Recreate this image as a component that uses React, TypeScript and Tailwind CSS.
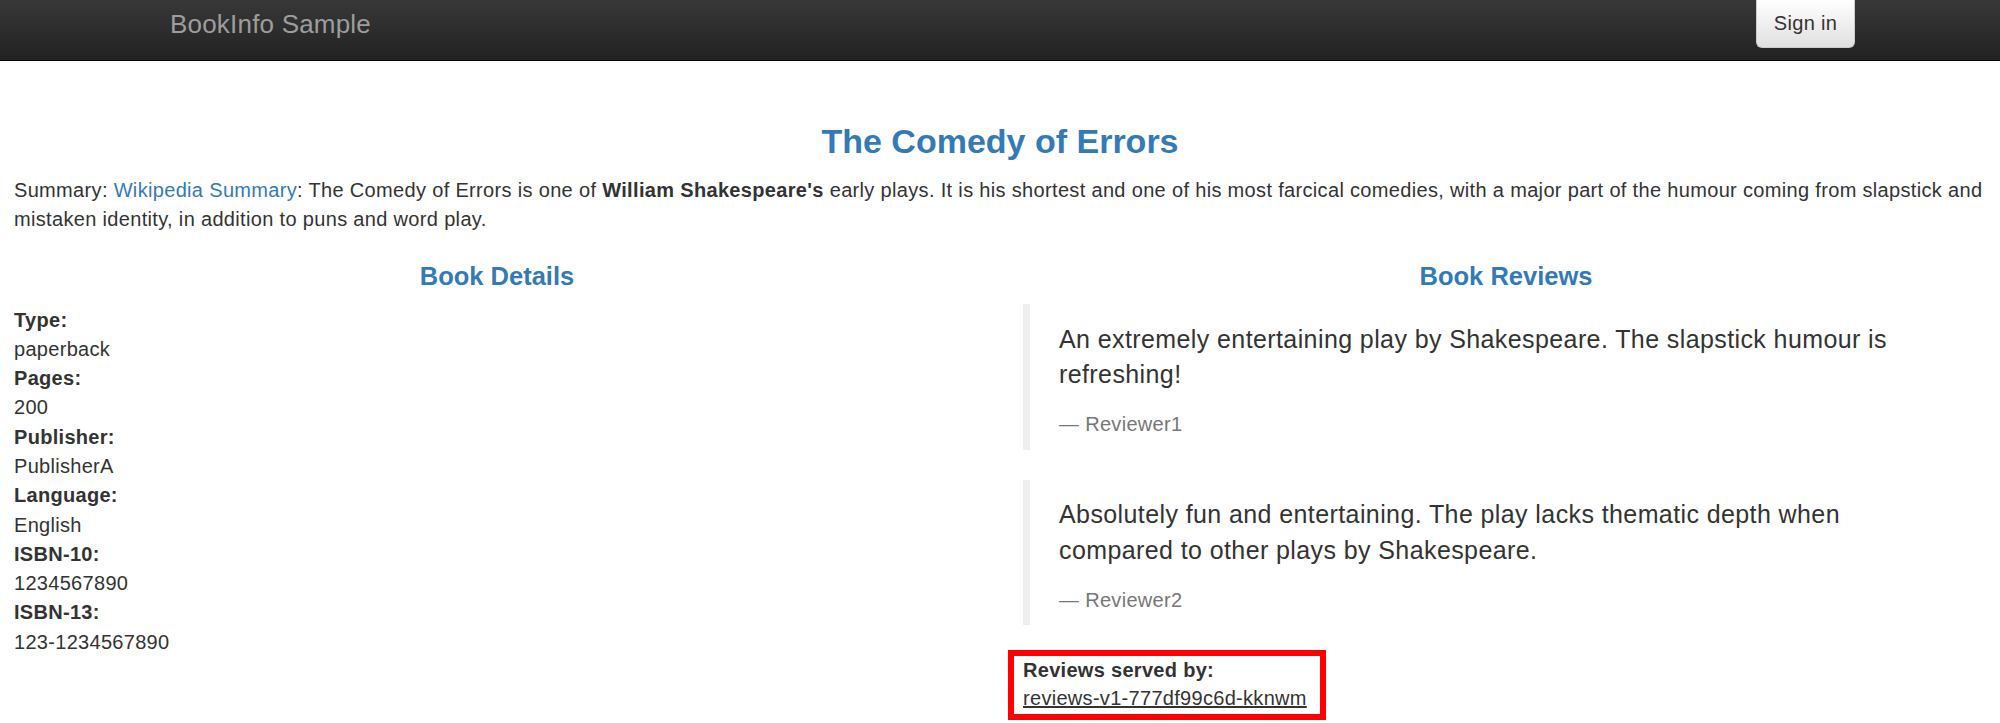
import React from 'react';

const details: [string, string][] = [
  ['Type:', 'paperback'],
  ['Pages:', '200'],
  ['Publisher:', 'PublisherA'],
  ['Language:', 'English'],
  ['ISBN-10:', '1234567890'],
  ['ISBN-13:', '123-1234567890'],
];

const reviews = [
  {
    text: 'An extremely entertaining play by Shakespeare. The slapstick humour is refreshing!',
    by: 'Reviewer1',
  },
  {
    text: 'Absolutely fun and entertaining. The play lacks thematic depth when compared to other plays by Shakespeare.',
    by: 'Reviewer2',
  },
];

export default function App() {
  return (
    <div className="min-h-screen bg-white font-['Liberation_Sans',Arial,sans-serif] text-[#333]">
      <nav className="flex h-[61px] items-start justify-between border-b border-[#080808] bg-gradient-to-b from-[#383838] to-[#222] pl-[170px] pr-[145px]">
        <a href="#" className="pt-[11px] text-[26px] leading-[26px] tracking-[0.2px] text-[#9d9d9d]">
          BookInfo Sample
        </a>
        <button className="flex h-[48px] w-[99px] items-center justify-center rounded-b-[6px] border border-t-0 border-[#ccc] bg-gradient-to-b from-white to-[#e0e0e0] text-[20px] leading-[28.6px] tracking-[0.3px] text-[#333]">
          Sign in
        </button>
      </nav>

      <div className="px-[14px]">
        <h2 className="mt-[61px] text-center text-[34px] font-bold leading-[38px] text-[#337ab7]">
          The Comedy of Errors
        </h2>
        <p className="-mr-[10px] mt-[15.5px] text-[20px] leading-[29px] tracking-[0.33px]">
          Summary: <a href="#" className="text-[#337ab7]">Wikipedia Summary</a>: The Comedy of Errors is one of{' '}
          <b>William Shakespeare's</b> early plays. It is his shortest and one of his most farcical comedies, with a
          major part of the humour coming from slapstick and mistaken identity, in addition to puns and word play.
        </p>
      </div>

      <div className="mt-[28.5px] grid grid-cols-2">
        <div className="pl-[14px] pr-[20px]">
          <h4 className="text-center text-[25.5px] font-bold leading-[28px] text-[#337ab7]">Book Details</h4>
          <dl className="mt-[15.5px] text-[20px] leading-[29.3px] tracking-[0.3px]">
            {details.map(([k, v]) => (
              <React.Fragment key={k}>
                <dt className="font-bold">{k}</dt>
                <dd>{v}</dd>
              </React.Fragment>
            ))}
          </dl>
        </div>

        <div className="pl-[23px] pr-[11px]">
          <h4 className="text-center text-[25.5px] font-bold leading-[28px] text-[#337ab7]">Book Reviews</h4>
          <div className="mt-[14px] flex flex-col gap-[30px]">
            {reviews.map((r) => (
              <blockquote
                key={r.by}
                className="border-l-[7px] border-[#eee] pb-[10.5px] pl-[29px] pr-[49px] pt-[17.5px]"
              >
                <p className="text-[25px] leading-[35.7px] tracking-[0.4px]">{r.text}</p>
                <footer className="mt-[17.5px] text-[20px] leading-[28.6px] tracking-[0.3px] text-[#777]">
                  — {r.by}
                </footer>
              </blockquote>
            ))}
          </div>
          <div className="-ml-[15px] mt-[24.5px] w-[318px] border-[6px] border-[#f00] pb-[1px] pl-[9px] text-[20px] leading-[28.6px] tracking-[0.3px]">
            <div className="font-bold">Reviews served by:</div>
            <a href="#" className="text-[#333] underline">
              reviews-v1-777df99c6d-kknwm
            </a>
          </div>
        </div>
      </div>
    </div>
  );
}
